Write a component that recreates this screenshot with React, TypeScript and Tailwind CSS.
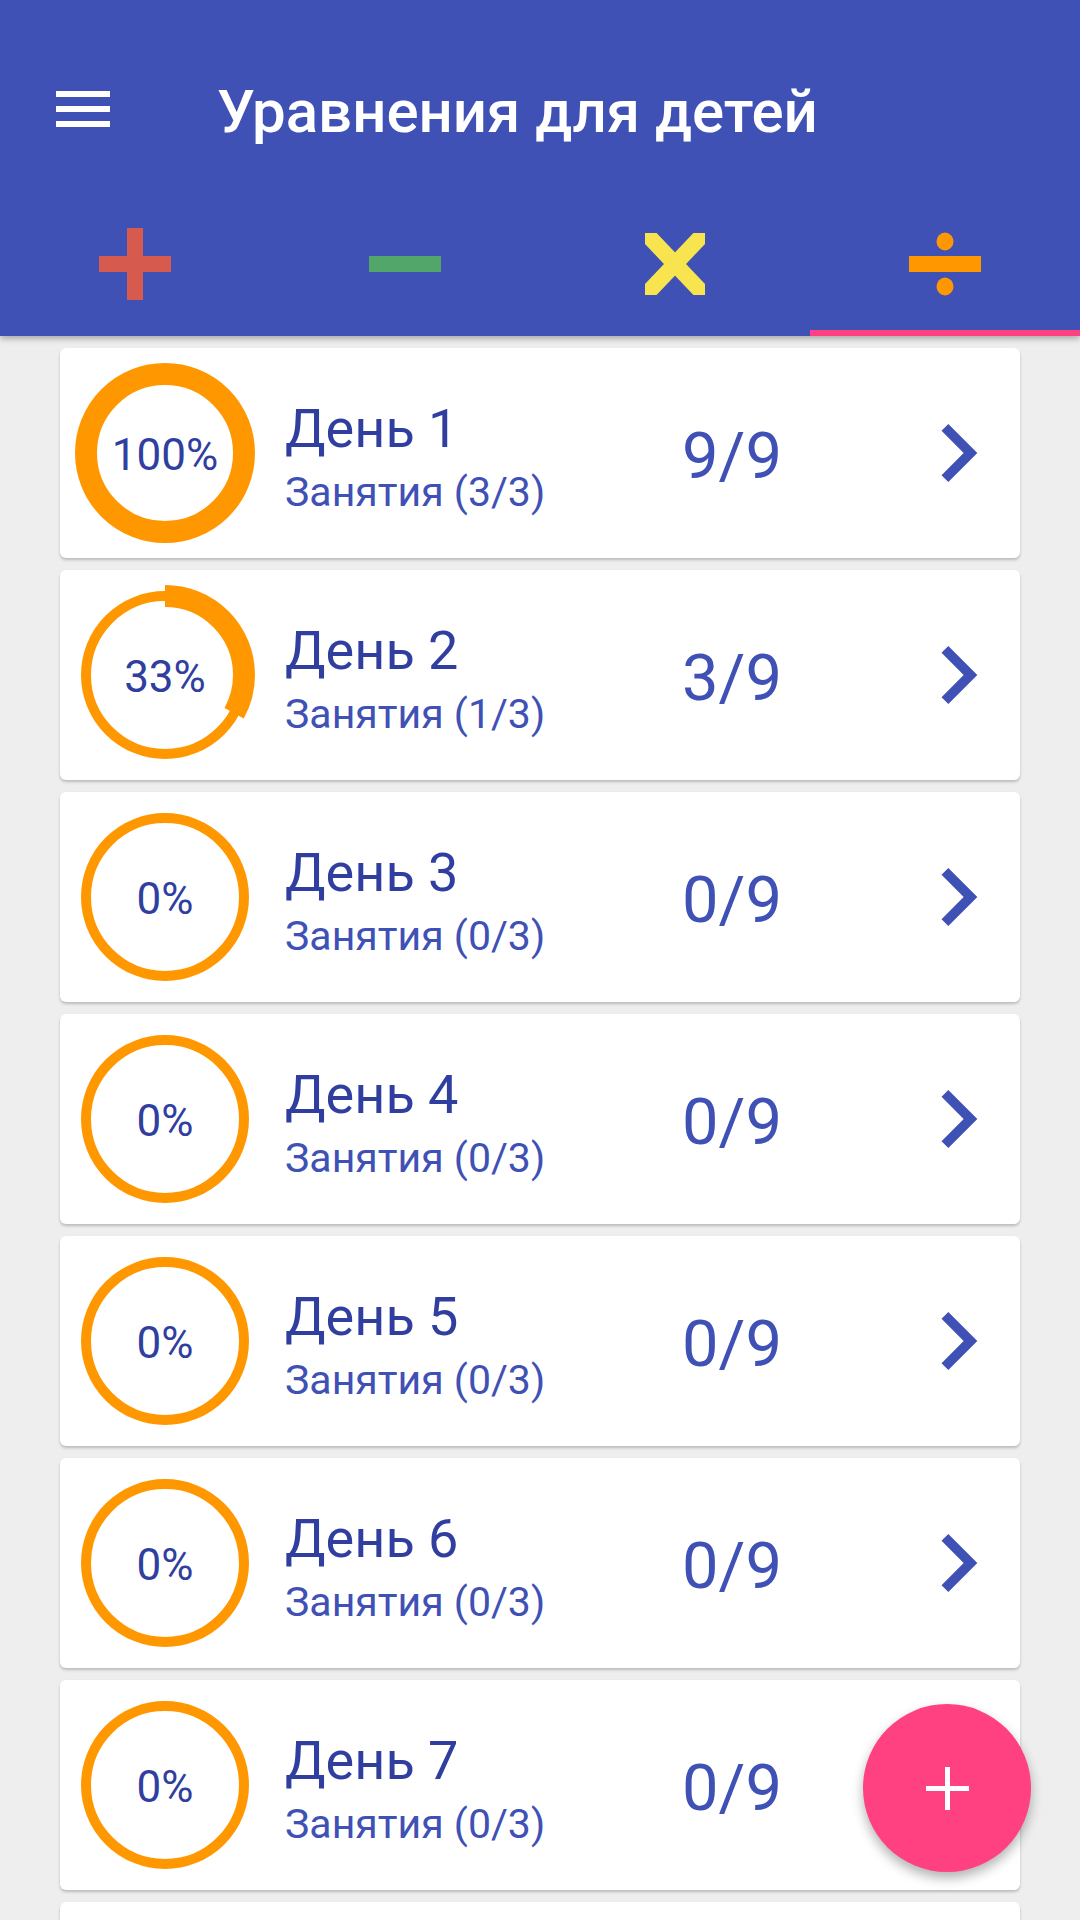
import React from 'react';

interface Day {
  day: number;
  done: number;
  solved: number;
}

const days: Day[] = [
  { day: 1, done: 3, solved: 9 },
  { day: 2, done: 1, solved: 3 },
  { day: 3, done: 0, solved: 0 },
  { day: 4, done: 0, solved: 0 },
  { day: 5, done: 0, solved: 0 },
  { day: 6, done: 0, solved: 0 },
  { day: 7, done: 0, solved: 0 },
];

const R = 79;
const CIRC = 2 * Math.PI * R;

function Ring({ pct }: { pct: number }) {
  return (
    <div className="relative w-[180px] h-[180px] shrink-0">
      <svg width="180" height="180" viewBox="0 0 180 180" className="absolute inset-0">
        <circle cx="90" cy="90" r={R} fill="none" stroke="#FF9800" strokeWidth="10" />
        {pct > 0 && (
          <circle
            cx="90"
            cy="90"
            r={R}
            fill="none"
            stroke="#FF9800"
            strokeWidth="22"
            strokeDasharray={`${(CIRC * pct) / 100} ${CIRC}`}
            transform="rotate(-90 90 90)"
          />
        )}
      </svg>
      <div className="absolute inset-0 flex items-center justify-center pt-[4px] text-[44px] leading-none text-[#303F9F]">
        {pct}%
      </div>
    </div>
  );
}

function Chevron() {
  return (
    <svg width="116" height="116" viewBox="0 0 24 24" fill="#3F51B5">
      <path d="M10 6L8.59 7.41 13.17 12l-4.58 4.59L10 18l6-6z" />
    </svg>
  );
}

function TabIcon({ kind }: { kind: 'plus' | 'minus' | 'times' | 'divide' }) {
  if (kind === 'plus') {
    return (
      <svg width="72" height="72" viewBox="0 0 72 72">
        <rect x="28" y="0" width="16" height="72" fill="#D65A4E" />
        <rect x="0" y="28" width="72" height="16" fill="#D65A4E" />
      </svg>
    );
  }
  if (kind === 'minus') {
    return (
      <svg width="72" height="72" viewBox="0 0 72 72">
        <rect x="0" y="28" width="72" height="16" fill="#53A66A" />
      </svg>
    );
  }
  if (kind === 'times') {
    return (
      <svg width="72" height="72" viewBox="0 0 72 72">
        <defs>
          <clipPath id="xbox">
            <rect x="6" y="5" width="60" height="62" />
          </clipPath>
        </defs>
        <g clipPath="url(#xbox)" stroke="#F7E44E" strokeWidth="16">
          <line x1="-2" y1="-4" x2="74" y2="76" />
          <line x1="74" y1="-4" x2="-2" y2="76" />
        </g>
      </svg>
    );
  }
  return (
    <svg width="72" height="72" viewBox="0 0 72 72">
      <rect x="0" y="28" width="72" height="16" fill="#FF9800" />
      <ellipse cx="36" cy="13.5" rx="8.5" ry="9" fill="#FF9800" />
      <ellipse cx="36" cy="58.5" rx="8.5" ry="9" fill="#FF9800" />
    </svg>
  );
}

export default function App() {
  const tabs: ('plus' | 'minus' | 'times' | 'divide')[] = ['plus', 'minus', 'times', 'divide'];

  return (
    <div
      className="relative w-[1080px] h-[1920px] overflow-hidden bg-[#EEEEEE]"
      style={{ fontFamily: 'Roboto, "Noto Sans", sans-serif' }}
    >
      {/* Header */}
      <div className="relative z-10 bg-[#3F51B5] shadow-[0_3px_6px_rgba(0,0,0,0.28)]">
        <div className="h-[192px] pt-[26px] flex items-center">
          <svg width="72" height="72" viewBox="0 0 24 24" fill="#FFFFFF" className="ml-[47px]">
            <path d="M3 6h18v2H3zM3 11h18v2H3zM3 16h18v2H3z" />
          </svg>
          <h1 className="ml-[98px] mt-[6px] text-white text-[60px] font-medium leading-none">Уравнения для детей</h1>
        </div>
        <div className="grid grid-cols-4 h-[144px]">
          {tabs.map((t, i) => (
            <div key={t} className="flex flex-col">
              <div className="flex-1 flex items-center justify-center pt-[6px]">
                <TabIcon kind={t} />
              </div>
              <div className={`h-[6px] ${i === 3 ? 'bg-[#FF4081]' : ''}`} />
            </div>
          ))}
        </div>
      </div>

      {/* Days list */}
      <div className="flex flex-col gap-[12px] pt-[12px] px-[60px]">
        {days.map((d) => {
          const pct = Math.round((d.done / 3) * 100);
          return (
            <div
              key={d.day}
              className="h-[210px] shrink-0 bg-white rounded-[6px] shadow-[0_2px_3px_rgba(0,0,0,0.22)] flex items-center pl-[15px]"
            >
              <Ring pct={pct} />
              <div className="ml-[30px] w-[340px] mt-[8px] flex flex-col">
                <span className="text-[54px] leading-[60px] text-[#303F9F]">День {d.day}</span>
                <span className="mt-[10px] text-[41px] leading-[46px] text-[#3F51B5]">Занятия ({d.done}/3)</span>
              </div>
              <div className="w-[214px] mt-[6px] text-center text-[65px] leading-none text-[#3F51B5]">
                {d.solved}/9
              </div>
              <div className="ml-[61px]">
                <Chevron />
              </div>
            </div>
          );
        })}
        {/* next card, only its top edge is in view */}
        <div className="h-[210px] shrink-0 bg-white rounded-[6px] shadow-[0_2px_3px_rgba(0,0,0,0.22)]" />
      </div>

      {/* FAB */}
      <button className="absolute right-[49px] bottom-[48px] z-20 w-[168px] h-[168px] rounded-full bg-[#FF4081] shadow-[0_6px_12px_rgba(0,0,0,0.3)] flex items-center justify-center">
        <svg width="43" height="43" viewBox="0 0 43 43" fill="#FFFFFF">
          <rect x="19" y="0" width="5" height="43" />
          <rect x="0" y="19" width="43" height="5" />
        </svg>
      </button>
    </div>
  );
}
